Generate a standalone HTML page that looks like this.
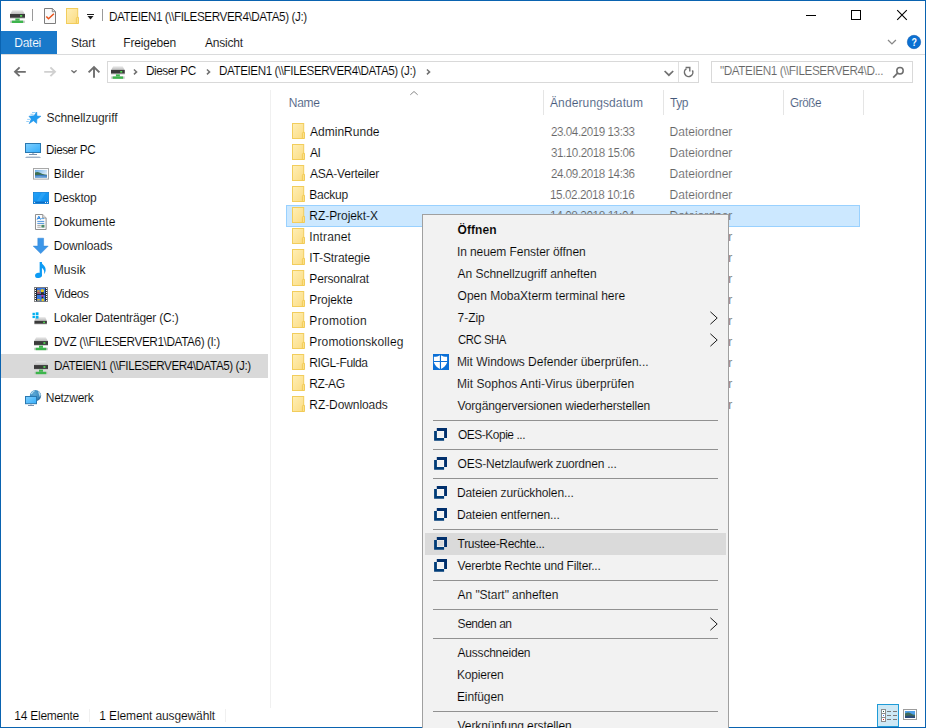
<!DOCTYPE html>
<html>
<head>
<meta charset="utf-8">
<title>DATEIEN1</title>
<style>
*{box-sizing:border-box;margin:0;padding:0}
html,body{width:926px;height:728px;overflow:hidden;background:#fff;font-family:"Liberation Sans",sans-serif}
body{font-family:"Liberation Sans",sans-serif;font-size:12px;color:#000;position:relative}
.abs{position:absolute}
.t{position:absolute;white-space:nowrap;line-height:14px;height:14px;transform-origin:0 50%;-webkit-text-stroke:0.12px #fff}
.hd{color:#44587a}
.gr{color:#666}
#frame{position:absolute;left:0;top:0;width:926px;height:728px;border:1px solid #0a63b0;z-index:5}
#filetab{position:absolute;left:1px;top:31px;width:56px;height:23px;background:#1979ca}
#ribline{position:absolute;left:1px;top:54px;width:924px;height:1px;background:#dadbdc}
.box{position:absolute;border:1px solid #d9d9d9;background:#fff}
.vsep{position:absolute;width:1px}
#navsel{position:absolute;left:1px;top:354px;width:267px;height:24px;background:#d9d9d9}
#navline{position:absolute;left:270px;top:90px;width:1px;height:618px;background:#f0f0f0}
.colsep{position:absolute;top:90px;width:1px;height:25px;background:#e5e5e5}
#rowsel{position:absolute;left:286px;top:205px;width:574px;height:22px;background:#cce8ff;border:1px solid #99d1ff}
#menu{position:absolute;left:422px;top:214px;width:307px;height:530px;background:#f2f2f2;border:1px solid #a0a0a0}
#menulayer{position:absolute;left:0;top:0;width:926px;height:728px;z-index:20;overflow:hidden}
.msep{position:absolute;left:433px;width:285px;height:1px;background:#919191}
#viewsel{position:absolute;left:877px;top:704px;width:22px;height:23px;background:#cde8f5;border:1px solid #1e9bd7}
</style>
</head>
<body>
<div id="frame"></div>

<!-- TITLE BAR ICONS -->
<div class="abs" style="left:10px;top:10px;width:15px;height:13px"><svg viewBox="0 0 14 13" width="100%" height="100%" preserveAspectRatio="none" style="display:block;overflow:visible" >
<defs><linearGradient id="ndg" x1="0" y1="0" x2="0" y2="1"><stop offset="0" stop-color="#ececec"/><stop offset="1" stop-color="#b9b9b9"/></linearGradient></defs>
<path d="M2.2,0.2 H11.8 L14,4.2 H0 Z" fill="url(#ndg)"/>
<rect x="0" y="4" width="14" height="3.9" fill="#3b3b3b"/>
<rect x="0" y="7.8" width="14" height="0.8" fill="#c4c4c4"/>
<rect x="9.4" y="5.1" width="2" height="1.6" fill="#55e455"/>
<rect x="5" y="8.5" width="4" height="2.5" fill="#3db54c"/>
<rect x="0" y="10.6" width="14" height="2.4" fill="#cfcfcf"/>
<rect x="1.7" y="10.6" width="10.6" height="2.4" fill="#3db54c"/>
</svg></div>
<div class="vsep" style="left:32px;top:9px;height:12px;background:#9a9a9a"></div>
<div class="abs" style="left:44px;top:8px;width:12px;height:16px"><svg viewBox="0 0 12 16" width="100%" height="100%" preserveAspectRatio="none" style="display:block;overflow:visible" >
<path d="M0.5,0.5 H8.3 L11.5,3.7 V15.5 H0.5 Z" fill="#fafafa" stroke="#7d7d7d" stroke-width="1"/>
<path d="M8.3,0.5 V3.7 H11.5" fill="none" stroke="#7d7d7d" stroke-width="0.9"/>
<path d="M2.3,8.4 L4.5,10.8 L9.9,5.8" fill="none" stroke="#e8521a" stroke-width="1.5"/>
</svg></div>
<div class="abs" style="left:66px;top:8px;width:13px;height:16px"><svg viewBox="0 0 13 16" width="100%" height="100%" preserveAspectRatio="none" style="display:block;overflow:visible" >
<defs><linearGradient id="fg" x1="0" y1="0" x2="1" y2="1"><stop offset="0" stop-color="#ffefb6"/><stop offset="1" stop-color="#fbdc83"/></linearGradient></defs>
<rect x="0.5" y="0.5" width="11.2" height="15" fill="url(#fg)" stroke="#f2cd5c" stroke-width="1"/>
<path d="M10.4,15.5 V10.3 Q10.4,9.4 11.3,9.4 H12.5 V15.5 Z" fill="#fbe08c" stroke="#f0c850" stroke-width="0.9"/>
</svg></div>
<div class="abs" style="left:87px;top:14px;width:7px;height:6px"><svg viewBox="0 0 7 6" width="100%" height="100%" preserveAspectRatio="none" style="display:block;overflow:visible" >
<rect x="0" y="0" width="7" height="1" fill="#1e1e1e"/>
<path d="M0.5,2 H6.5 L3.5,5.6 Z" fill="#1e1e1e"/>
</svg></div>
<div class="vsep" style="left:102px;top:9px;height:12px;background:#9a9a9a"></div>
<div class="abs" style="left:806px;top:15px;width:10px;height:1px"><svg viewBox="0 0 10 1" width="100%" height="100%" preserveAspectRatio="none" style="display:block;overflow:visible" shape-rendering="crispEdges"><rect x="0" y="0" width="10" height="1" fill="#000"/></svg></div>
<div class="abs" style="left:851px;top:10px;width:10px;height:10px"><svg viewBox="0 0 10 10" width="100%" height="100%" preserveAspectRatio="none" style="display:block;overflow:visible" shape-rendering="crispEdges"><rect x="0.5" y="0.5" width="9" height="9" fill="none" stroke="#000" stroke-width="1"/></svg></div>
<div class="abs" style="left:897px;top:10px;width:10px;height:10px"><svg viewBox="0 0 10 10" width="100%" height="100%" preserveAspectRatio="none" style="display:block;overflow:visible" ><path d="M0.2,0.2 L9.8,9.8 M9.8,0.2 L0.2,9.8" stroke="#000" stroke-width="1.1" fill="none"/></svg></div>

<!-- RIBBON -->
<div id="filetab"></div>
<div id="ribline"></div>
<div class="abs" style="left:887px;top:39px;width:10px;height:6px"><svg viewBox="887 39 10 6" width="100%" height="100%" preserveAspectRatio="none" style="display:block;overflow:visible" ><path d="M888,40 L891.95,43.9 L895.9,40" fill="none" stroke="#888" stroke-width="1.3"/></svg></div>
<div class="abs" style="left:907px;top:35px;width:14px;height:14px"><svg viewBox="0 0 14 14" width="100%" height="100%" preserveAspectRatio="none" style="display:block;overflow:visible" >
<circle cx="7" cy="7" r="6.7" fill="#0a70d2" stroke="#0c5cb4" stroke-width="0.6"/>
<text x="7.2" y="11.1" font-family="Liberation Sans, sans-serif" font-weight="bold" font-size="10.5" textLength="5.4" lengthAdjust="spacingAndGlyphs" fill="#fff" text-anchor="middle">?</text>
</svg></div>

<!-- ADDRESS BAR -->
<div class="abs" style="left:14px;top:67px;width:12px;height:9.6px"><svg viewBox="0 0 12 10" width="100%" height="100%" preserveAspectRatio="none" style="display:block;overflow:visible" ><path d="M11.8,5 H1.4 M5.6,0.4 L1,5 L5.6,9.6" fill="none" stroke="#6e6e6e" stroke-width="1.9"/></svg></div>
<div class="abs" style="left:44px;top:67px;width:12px;height:9.6px"><svg viewBox="0 0 12 10" width="100%" height="100%" preserveAspectRatio="none" style="display:block;overflow:visible" ><path d="M0.2,5 H10.6 M6.4,0.4 L11,5 L6.4,9.6" fill="none" stroke="#d0d0d0" stroke-width="1.9"/></svg></div>
<div class="abs" style="left:70.5px;top:69.7px;width:6px;height:3.4px"><svg viewBox="0 0 6 4" width="100%" height="100%" preserveAspectRatio="none" style="display:block;overflow:visible" ><path d="M0.4,0.4 L3,3 L5.6,0.4" fill="none" stroke="#6e6e6e" stroke-width="1.5"/></svg></div>
<div class="abs" style="left:88px;top:66px;width:12px;height:12px"><svg viewBox="0 0 12 12" width="100%" height="100%" preserveAspectRatio="none" style="display:block;overflow:visible" ><path d="M6,11.8 V1.4 M0.6,6.4 L6,1 L11.4,6.4" fill="none" stroke="#6e6e6e" stroke-width="1.9"/></svg></div>
<div class="box" style="left:107px;top:61px;width:592px;height:22px"></div>
<div class="vsep" style="left:678px;top:62px;height:20px;background:#e0e0e0"></div>
<div class="box" style="left:711px;top:61px;width:202px;height:22px"></div>
<div class="abs" style="left:111.4px;top:66.3px;width:13.8px;height:12.8px"><svg viewBox="0 0 14 13" width="100%" height="100%" preserveAspectRatio="none" style="display:block;overflow:visible" >
<defs><linearGradient id="ndg" x1="0" y1="0" x2="0" y2="1"><stop offset="0" stop-color="#ececec"/><stop offset="1" stop-color="#b9b9b9"/></linearGradient></defs>
<path d="M2.2,0.2 H11.8 L14,4.2 H0 Z" fill="url(#ndg)"/>
<rect x="0" y="4" width="14" height="3.9" fill="#3b3b3b"/>
<rect x="0" y="7.8" width="14" height="0.8" fill="#c4c4c4"/>
<rect x="9.4" y="5.1" width="2" height="1.6" fill="#55e455"/>
<rect x="5" y="8.5" width="4" height="2.5" fill="#3db54c"/>
<rect x="0" y="10.6" width="14" height="2.4" fill="#cfcfcf"/>
<rect x="1.7" y="10.6" width="10.6" height="2.4" fill="#3db54c"/>
</svg></div>
<div class="abs" style="left:133.4px;top:69.1px;width:4.7px;height:5.8px"><svg viewBox="0 0 5 6" width="100%" height="100%" preserveAspectRatio="none" style="display:block;overflow:visible" ><path d="M1,0.5 L3.8,3 L1,5.5" fill="none" stroke="#707070" stroke-width="1.6"/></svg></div>
<div class="abs" style="left:205.8px;top:69.1px;width:4.7px;height:5.8px"><svg viewBox="0 0 5 6" width="100%" height="100%" preserveAspectRatio="none" style="display:block;overflow:visible" ><path d="M1,0.5 L3.8,3 L1,5.5" fill="none" stroke="#707070" stroke-width="1.6"/></svg></div>
<div class="abs" style="left:426.2px;top:69.1px;width:4.7px;height:5.8px"><svg viewBox="0 0 5 6" width="100%" height="100%" preserveAspectRatio="none" style="display:block;overflow:visible" ><path d="M1,0.5 L3.8,3 L1,5.5" fill="none" stroke="#707070" stroke-width="1.6"/></svg></div>
<div class="abs" style="left:664px;top:70px;width:10px;height:6px"><svg viewBox="664 70 10 6" width="100%" height="100%" preserveAspectRatio="none" style="display:block;overflow:visible" ><path d="M664.6,71 L668.9,75.2 L673.2,71" fill="none" stroke="#707070" stroke-width="1.7"/></svg></div>
<div class="abs" style="left:683px;top:66px;width:12px;height:13px"><svg viewBox="683 66 12 13" width="100%" height="100%" preserveAspectRatio="none" style="display:block;overflow:visible" >
<path d="M686.5,68.7 A4.2,4.2 0 1 0 692.4,70.4" fill="none" stroke="#6e6e6e" stroke-width="1.5"/>
<path d="M685.6,67.5 H689.8 V71.4" fill="none" stroke="#6e6e6e" stroke-width="1.4"/>
</svg></div>
<div class="abs" style="left:892px;top:66px;width:13px;height:13px"><svg viewBox="892 66 13 13" width="100%" height="100%" preserveAspectRatio="none" style="display:block;overflow:visible" >
<circle cx="900" cy="70.7" r="3.2" fill="none" stroke="#6e6e6e" stroke-width="1.5"/>
<path d="M897.6,73.2 L893.2,77.7" stroke="#6e6e6e" stroke-width="1.7" fill="none"/>
</svg></div>

<!-- NAV PANE -->
<div id="navsel"></div>
<div id="navline"></div>
<div class="abs" style="left:26px;top:111px;width:16px;height:14px"><svg viewBox="26 111 16 14" width="100%" height="100%" preserveAspectRatio="none" style="display:block;overflow:visible" >
<path d="M36.7,112 L37,116 L41,116.2 L36.9,119.3 L36.7,123.4 L33.4,120.8 L29.1,123.7 L31.2,119 L28.9,116.2 L33.9,115.7 Z" fill="#219cf0" stroke="#1c8fe4" stroke-width="0.5" stroke-linejoin="round"/>
<path d="M32,112.5 H35.8 M30.4,114.3 H33.6 M27.2,119.4 H30 M26.3,121.5 H28.9" stroke="#8ccbf6" stroke-width="0.9" fill="none"/>
</svg></div>
<div class="abs" style="left:25px;top:143px;width:16px;height:15px"><svg viewBox="25 143 16 15" width="100%" height="100%" preserveAspectRatio="none" style="display:block;overflow:visible" >
<defs><linearGradient id="pcg" x1="0" y1="0" x2="1" y2="1"><stop offset="0" stop-color="#80d0ff"/><stop offset="1" stop-color="#34adfb"/></linearGradient>
<linearGradient id="pcb" x1="0" y1="0" x2="0" y2="1"><stop offset="0" stop-color="#d4dde7"/><stop offset="1" stop-color="#8aa0b9"/></linearGradient></defs>
<rect x="25.5" y="143.5" width="15" height="9" fill="url(#pcg)" stroke="#2a78b0" stroke-width="1"/>
<rect x="32" y="153" width="2.2" height="1" fill="#b4c0ce"/>
<rect x="29" y="154" width="8" height="1" fill="#7892b0"/>
<path d="M26.6,156.2 H39.4 L41,158 H25 Z" fill="url(#pcb)"/>
</svg></div>
<div class="abs" style="left:33px;top:168px;width:16px;height:11.6px"><svg viewBox="0 0 16 12" width="100%" height="100%" preserveAspectRatio="none" style="display:block;overflow:visible" >
<defs><linearGradient id="sky" x1="0" y1="0" x2="1" y2="0.6"><stop offset="0" stop-color="#6aaee8"/><stop offset="1" stop-color="#e6f1fa"/></linearGradient></defs>
<rect x="0.5" y="0.5" width="15" height="11" fill="#fdfdfd" stroke="#a6a6a6" stroke-width="1"/>
<rect x="2" y="2" width="12" height="8" fill="url(#sky)"/>
<path d="M2,4.6 Q4.6,3.4 7,5 T12,6.6 L14,7 V8 H2 Z" fill="#3f6f50"/>
<path d="M2,7.4 Q8,6.6 14,7.6 V10 H2 Z" fill="#3d7cc0"/>
<path d="M2,8.8 Q8,8.2 14,9 V10 H2 Z" fill="#7fb0dc"/>
</svg></div>
<div class="abs" style="left:33px;top:192px;width:16px;height:12px"><svg viewBox="0 0 16 12" width="100%" height="100%" preserveAspectRatio="none" style="display:block;overflow:visible" >
<defs><linearGradient id="dtg" x1="0" y1="0" x2="1" y2="1"><stop offset="0" stop-color="#25a2f8"/><stop offset="0.5" stop-color="#1596f2"/><stop offset="1" stop-color="#0c8cec"/></linearGradient></defs>
<rect x="0.4" y="0.4" width="15.2" height="11.2" fill="url(#dtg)" stroke="#1080d8" stroke-width="0.8"/>
<path d="M9,0.8 L13,0.8 L7,9.4 L3.4,9.4 Z" fill="#4ab4fb" opacity="0.35"/>
<rect x="0.4" y="9.6" width="15.2" height="1.6" fill="#0b6cc4"/>
<rect x="1.1" y="9.9" width="1" height="1" fill="#fff"/><rect x="12" y="9.9" width="1" height="1" fill="#fff"/><rect x="14" y="9.9" width="1" height="1" fill="#fff"/>
</svg></div>
<div class="abs" style="left:35.2px;top:213.5px;width:11.6px;height:16px"><svg viewBox="0 0 12 16" width="100%" height="100%" preserveAspectRatio="none" style="display:block;overflow:visible" >
<path d="M0.5,0.5 H8 L11.5,4 V15.5 H0.5 Z" fill="#fcfcfc" stroke="#8e8e8e" stroke-width="1"/>
<path d="M8,0.5 V4 H11.5" fill="#e6e6e6" stroke="#8e8e8e" stroke-width="0.9"/>
<path d="M2.2,5.6 L4,2.2 L5.8,5.6 M3,4.4 H5" stroke="#1f7fe0" stroke-width="1" fill="none"/><path d="M6.4,4.6 H9.4" stroke="#4a9ae6" stroke-width="0.9"/>
<path d="M2.4,7.4 H9.6 M2.4,9.4 H9.6" stroke="#4a90d9" stroke-width="1"/>
<path d="M2.4,11.4 H6 M2.4,13.2 H6" stroke="#9a9a9a" stroke-width="0.9"/>
<rect x="6.6" y="10.8" width="3.2" height="2.8" fill="#4d8a6a"/>
</svg></div>
<div class="abs" style="left:33.4px;top:238.2px;width:15.4px;height:15.8px"><svg viewBox="0 0 16 16" width="100%" height="100%" preserveAspectRatio="none" style="display:block;overflow:visible" ><path d="M5,0.2 H11 V8.2 H15.8 L8,15.8 L0.2,8.2 H5 Z" fill="#3c96e8" stroke="#2c80d4" stroke-width="0.5"/></svg></div>
<div class="abs" style="left:35.2px;top:262px;width:11.4px;height:16px"><svg viewBox="0 0 12 16" width="100%" height="100%" preserveAspectRatio="none" style="display:block;overflow:visible" >
<ellipse cx="3.7" cy="13.4" rx="3.7" ry="2.6" fill="#0d9bf4" transform="rotate(-12 3.7 13.4)"/>
<rect x="4.9" y="0" width="2.4" height="13.6" fill="#0d9bf4"/>
<path d="M6.2,0 C7.6,2.6 11.6,4 11.2,8.2 C11.1,9.8 10.6,10.8 9.6,12 C10.2,9 9.4,6.6 6.2,5.4 Z" fill="#0d9bf4"/>
</svg></div>
<div class="abs" style="left:34px;top:287px;width:14px;height:15px"><svg viewBox="0 0 14 15" width="100%" height="100%" preserveAspectRatio="none" style="display:block;overflow:visible" >
<rect x="0.4" y="0.4" width="13.2" height="14.2" fill="#1c1c1c" stroke="#7d7d7d" stroke-width="0.8"/>
<rect x="2.8" y="0.9" width="8.4" height="6.2" fill="#3a78e0"/>
<rect x="2.8" y="7.9" width="8.4" height="6.2" fill="#3a78e0"/>
<circle cx="8.3" cy="3.7" r="1.7" fill="#e8c81e"/><rect x="7" y="5.2" width="2.8" height="1.9" fill="#2a2a2a"/>
<rect x="3.2" y="3.2" width="2.4" height="1.6" fill="#e6a030"/><rect x="3" y="5.2" width="3.4" height="1.4" fill="#c8483a"/>
<circle cx="8.4" cy="8.9" r="1.2" fill="#c03aa0"/><rect x="7.6" y="9.6" width="1.6" height="2" fill="#2a2a2a"/>
<circle cx="8.8" cy="12.9" r="1.4" fill="#e8c81e"/><rect x="3.2" y="12" width="2.6" height="1.6" fill="#d8b040"/>
<g fill="#fff"><rect x="0.9" y="1.0" width="1.1" height="1.1"/><rect x="12" y="1.0" width="1.1" height="1.1"/><rect x="0.9" y="3.0" width="1.1" height="1.1"/><rect x="12" y="3.0" width="1.1" height="1.1"/><rect x="0.9" y="5.0" width="1.1" height="1.1"/><rect x="12" y="5.0" width="1.1" height="1.1"/><rect x="0.9" y="7.0" width="1.1" height="1.1"/><rect x="12" y="7.0" width="1.1" height="1.1"/><rect x="0.9" y="9.0" width="1.1" height="1.1"/><rect x="12" y="9.0" width="1.1" height="1.1"/><rect x="0.9" y="11.0" width="1.1" height="1.1"/><rect x="12" y="11.0" width="1.1" height="1.1"/><rect x="0.9" y="13.0" width="1.1" height="1.1"/><rect x="12" y="13.0" width="1.1" height="1.1"/></g>
</svg></div>
<div class="abs" style="left:32px;top:312px;width:16px;height:13px"><svg viewBox="32.5 312 16 13" width="100%" height="100%" preserveAspectRatio="none" style="display:block;overflow:visible" >
<defs><linearGradient id="ldg" x1="0" y1="0" x2="0" y2="1"><stop offset="0" stop-color="#eeeeee"/><stop offset="1" stop-color="#b4b4b4"/></linearGradient></defs>
<path d="M36.4,317 H45.8 L47.4,321 H34.9 Z" fill="url(#ldg)"/>
<g fill="#00b0f0"><rect x="33" y="312.8" width="2.4" height="2.3"/><rect x="36.2" y="312.3" width="2.8" height="2.8"/><rect x="33" y="315.8" width="2.4" height="2.3"/><rect x="36.2" y="315.8" width="2.8" height="2.8"/></g>
<rect x="34.9" y="320.9" width="12.5" height="3" fill="#3a3a3a"/>
<rect x="43.7" y="321.7" width="1.7" height="1.4" fill="#4fe64f"/>
<rect x="34.9" y="323.8" width="12.5" height="0.7" fill="#c9c9c9"/>
</svg></div>
<div class="abs" style="left:34px;top:336.8px;width:14px;height:13.2px"><svg viewBox="0 0 14 13" width="100%" height="100%" preserveAspectRatio="none" style="display:block;overflow:visible" >
<defs><linearGradient id="ndg" x1="0" y1="0" x2="0" y2="1"><stop offset="0" stop-color="#ececec"/><stop offset="1" stop-color="#b9b9b9"/></linearGradient></defs>
<path d="M2.2,0.2 H11.8 L14,4.2 H0 Z" fill="url(#ndg)"/>
<rect x="0" y="4" width="14" height="3.9" fill="#3b3b3b"/>
<rect x="0" y="7.8" width="14" height="0.8" fill="#c4c4c4"/>
<rect x="9.4" y="5.1" width="2" height="1.6" fill="#55e455"/>
<rect x="5" y="8.5" width="4" height="2.5" fill="#3db54c"/>
<rect x="0" y="10.6" width="14" height="2.4" fill="#cfcfcf"/>
<rect x="1.7" y="10.6" width="10.6" height="2.4" fill="#3db54c"/>
</svg></div>
<div class="abs" style="left:34px;top:360.8px;width:14px;height:13.2px"><svg viewBox="0 0 14 13" width="100%" height="100%" preserveAspectRatio="none" style="display:block;overflow:visible" >
<defs><linearGradient id="ndg" x1="0" y1="0" x2="0" y2="1"><stop offset="0" stop-color="#ececec"/><stop offset="1" stop-color="#b9b9b9"/></linearGradient></defs>
<path d="M2.2,0.2 H11.8 L14,4.2 H0 Z" fill="url(#ndg)"/>
<rect x="0" y="4" width="14" height="3.9" fill="#3b3b3b"/>
<rect x="0" y="7.8" width="14" height="0.8" fill="#c4c4c4"/>
<rect x="9.4" y="5.1" width="2" height="1.6" fill="#55e455"/>
<rect x="5" y="8.5" width="4" height="2.5" fill="#3db54c"/>
<rect x="0" y="10.6" width="14" height="2.4" fill="#cfcfcf"/>
<rect x="1.7" y="10.6" width="10.6" height="2.4" fill="#3db54c"/>
</svg></div>
<div class="abs" style="left:25px;top:389px;width:17px;height:18px"><svg viewBox="25 389 17 18" width="100%" height="100%" preserveAspectRatio="none" style="display:block;overflow:visible" >
<defs><radialGradient id="glb" cx="0.4" cy="0.35" r="0.75"><stop offset="0" stop-color="#5aa8d6"/><stop offset="0.6" stop-color="#3b8abf"/><stop offset="1" stop-color="#245f8f"/></radialGradient>
<linearGradient id="nwm" x1="0" y1="0" x2="1" y2="1"><stop offset="0" stop-color="#80d0ff"/><stop offset="1" stop-color="#34adfb"/></linearGradient></defs>
<circle cx="35.5" cy="395.6" r="5.6" fill="url(#glb)"/>
<path d="M31,393.2 Q32.4,390.8 35,390.4 Q34.6,392 33,392.6 Q32.6,394 31.2,394.6 Z M38,391 Q40.2,392 40.8,394.6 Q40.6,396.6 39.8,397 Q39.2,395 38.6,393.4 Z" fill="#cfeaf6" opacity="0.85"/>
<rect x="25.5" y="396.5" width="11" height="7.2" fill="url(#nwm)" stroke="#2a78b0" stroke-width="1"/>
<rect x="30" y="404.1" width="2" height="0.9" fill="#b4c0ce"/>
<rect x="28" y="405" width="6" height="1" fill="#7892b0"/>
</svg></div>

<!-- HEADER -->
<div class="colsep" style="left:543px"></div>
<div class="colsep" style="left:663px"></div>
<div class="colsep" style="left:783px"></div>
<div class="colsep" style="left:863px"></div>
<div class="abs" style="left:409.8px;top:90.5px;width:8px;height:4px"><svg viewBox="0 0 8 4" width="100%" height="100%" preserveAspectRatio="none" style="display:block;overflow:visible" ><path d="M0.3,3.8 L4,0.5 L7.7,3.8" fill="none" stroke="#8a8a8a" stroke-width="1"/></svg></div>

<!-- ROWS -->
<div id="rowsel"></div>
<div class="abs" style="left:292px;top:123px;width:13px;height:16px"><svg viewBox="0 0 13 16" width="100%" height="100%" preserveAspectRatio="none" style="display:block;overflow:visible" >
<defs><linearGradient id="fg" x1="0" y1="0" x2="1" y2="1"><stop offset="0" stop-color="#ffefb6"/><stop offset="1" stop-color="#fbdc83"/></linearGradient></defs>
<rect x="0.5" y="0.5" width="11.2" height="15" fill="url(#fg)" stroke="#f2cd5c" stroke-width="1"/>
<path d="M10.4,15.5 V10.3 Q10.4,9.4 11.3,9.4 H12.5 V15.5 Z" fill="#fbe08c" stroke="#f0c850" stroke-width="0.9"/>
</svg></div>
<div class="abs" style="left:292px;top:144px;width:13px;height:16px"><svg viewBox="0 0 13 16" width="100%" height="100%" preserveAspectRatio="none" style="display:block;overflow:visible" >
<defs><linearGradient id="fg" x1="0" y1="0" x2="1" y2="1"><stop offset="0" stop-color="#ffefb6"/><stop offset="1" stop-color="#fbdc83"/></linearGradient></defs>
<rect x="0.5" y="0.5" width="11.2" height="15" fill="url(#fg)" stroke="#f2cd5c" stroke-width="1"/>
<path d="M10.4,15.5 V10.3 Q10.4,9.4 11.3,9.4 H12.5 V15.5 Z" fill="#fbe08c" stroke="#f0c850" stroke-width="0.9"/>
</svg></div>
<div class="abs" style="left:292px;top:165px;width:13px;height:16px"><svg viewBox="0 0 13 16" width="100%" height="100%" preserveAspectRatio="none" style="display:block;overflow:visible" >
<defs><linearGradient id="fg" x1="0" y1="0" x2="1" y2="1"><stop offset="0" stop-color="#ffefb6"/><stop offset="1" stop-color="#fbdc83"/></linearGradient></defs>
<rect x="0.5" y="0.5" width="11.2" height="15" fill="url(#fg)" stroke="#f2cd5c" stroke-width="1"/>
<path d="M10.4,15.5 V10.3 Q10.4,9.4 11.3,9.4 H12.5 V15.5 Z" fill="#fbe08c" stroke="#f0c850" stroke-width="0.9"/>
</svg></div>
<div class="abs" style="left:292px;top:186px;width:13px;height:16px"><svg viewBox="0 0 13 16" width="100%" height="100%" preserveAspectRatio="none" style="display:block;overflow:visible" >
<defs><linearGradient id="fg" x1="0" y1="0" x2="1" y2="1"><stop offset="0" stop-color="#ffefb6"/><stop offset="1" stop-color="#fbdc83"/></linearGradient></defs>
<rect x="0.5" y="0.5" width="11.2" height="15" fill="url(#fg)" stroke="#f2cd5c" stroke-width="1"/>
<path d="M10.4,15.5 V10.3 Q10.4,9.4 11.3,9.4 H12.5 V15.5 Z" fill="#fbe08c" stroke="#f0c850" stroke-width="0.9"/>
</svg></div>
<div class="abs" style="left:292px;top:207px;width:13px;height:16px"><svg viewBox="0 0 13 16" width="100%" height="100%" preserveAspectRatio="none" style="display:block;overflow:visible" >
<defs><linearGradient id="fg" x1="0" y1="0" x2="1" y2="1"><stop offset="0" stop-color="#ffefb6"/><stop offset="1" stop-color="#fbdc83"/></linearGradient></defs>
<rect x="0.5" y="0.5" width="11.2" height="15" fill="url(#fg)" stroke="#f2cd5c" stroke-width="1"/>
<path d="M10.4,15.5 V10.3 Q10.4,9.4 11.3,9.4 H12.5 V15.5 Z" fill="#fbe08c" stroke="#f0c850" stroke-width="0.9"/>
</svg></div>
<div class="abs" style="left:292px;top:228px;width:13px;height:16px"><svg viewBox="0 0 13 16" width="100%" height="100%" preserveAspectRatio="none" style="display:block;overflow:visible" >
<defs><linearGradient id="fg" x1="0" y1="0" x2="1" y2="1"><stop offset="0" stop-color="#ffefb6"/><stop offset="1" stop-color="#fbdc83"/></linearGradient></defs>
<rect x="0.5" y="0.5" width="11.2" height="15" fill="url(#fg)" stroke="#f2cd5c" stroke-width="1"/>
<path d="M10.4,15.5 V10.3 Q10.4,9.4 11.3,9.4 H12.5 V15.5 Z" fill="#fbe08c" stroke="#f0c850" stroke-width="0.9"/>
</svg></div>
<div class="abs" style="left:292px;top:249px;width:13px;height:16px"><svg viewBox="0 0 13 16" width="100%" height="100%" preserveAspectRatio="none" style="display:block;overflow:visible" >
<defs><linearGradient id="fg" x1="0" y1="0" x2="1" y2="1"><stop offset="0" stop-color="#ffefb6"/><stop offset="1" stop-color="#fbdc83"/></linearGradient></defs>
<rect x="0.5" y="0.5" width="11.2" height="15" fill="url(#fg)" stroke="#f2cd5c" stroke-width="1"/>
<path d="M10.4,15.5 V10.3 Q10.4,9.4 11.3,9.4 H12.5 V15.5 Z" fill="#fbe08c" stroke="#f0c850" stroke-width="0.9"/>
</svg></div>
<div class="abs" style="left:292px;top:270px;width:13px;height:16px"><svg viewBox="0 0 13 16" width="100%" height="100%" preserveAspectRatio="none" style="display:block;overflow:visible" >
<defs><linearGradient id="fg" x1="0" y1="0" x2="1" y2="1"><stop offset="0" stop-color="#ffefb6"/><stop offset="1" stop-color="#fbdc83"/></linearGradient></defs>
<rect x="0.5" y="0.5" width="11.2" height="15" fill="url(#fg)" stroke="#f2cd5c" stroke-width="1"/>
<path d="M10.4,15.5 V10.3 Q10.4,9.4 11.3,9.4 H12.5 V15.5 Z" fill="#fbe08c" stroke="#f0c850" stroke-width="0.9"/>
</svg></div>
<div class="abs" style="left:292px;top:291px;width:13px;height:16px"><svg viewBox="0 0 13 16" width="100%" height="100%" preserveAspectRatio="none" style="display:block;overflow:visible" >
<defs><linearGradient id="fg" x1="0" y1="0" x2="1" y2="1"><stop offset="0" stop-color="#ffefb6"/><stop offset="1" stop-color="#fbdc83"/></linearGradient></defs>
<rect x="0.5" y="0.5" width="11.2" height="15" fill="url(#fg)" stroke="#f2cd5c" stroke-width="1"/>
<path d="M10.4,15.5 V10.3 Q10.4,9.4 11.3,9.4 H12.5 V15.5 Z" fill="#fbe08c" stroke="#f0c850" stroke-width="0.9"/>
</svg></div>
<div class="abs" style="left:292px;top:312px;width:13px;height:16px"><svg viewBox="0 0 13 16" width="100%" height="100%" preserveAspectRatio="none" style="display:block;overflow:visible" >
<defs><linearGradient id="fg" x1="0" y1="0" x2="1" y2="1"><stop offset="0" stop-color="#ffefb6"/><stop offset="1" stop-color="#fbdc83"/></linearGradient></defs>
<rect x="0.5" y="0.5" width="11.2" height="15" fill="url(#fg)" stroke="#f2cd5c" stroke-width="1"/>
<path d="M10.4,15.5 V10.3 Q10.4,9.4 11.3,9.4 H12.5 V15.5 Z" fill="#fbe08c" stroke="#f0c850" stroke-width="0.9"/>
</svg></div>
<div class="abs" style="left:292px;top:333px;width:13px;height:16px"><svg viewBox="0 0 13 16" width="100%" height="100%" preserveAspectRatio="none" style="display:block;overflow:visible" >
<defs><linearGradient id="fg" x1="0" y1="0" x2="1" y2="1"><stop offset="0" stop-color="#ffefb6"/><stop offset="1" stop-color="#fbdc83"/></linearGradient></defs>
<rect x="0.5" y="0.5" width="11.2" height="15" fill="url(#fg)" stroke="#f2cd5c" stroke-width="1"/>
<path d="M10.4,15.5 V10.3 Q10.4,9.4 11.3,9.4 H12.5 V15.5 Z" fill="#fbe08c" stroke="#f0c850" stroke-width="0.9"/>
</svg></div>
<div class="abs" style="left:292px;top:354px;width:13px;height:16px"><svg viewBox="0 0 13 16" width="100%" height="100%" preserveAspectRatio="none" style="display:block;overflow:visible" >
<defs><linearGradient id="fg" x1="0" y1="0" x2="1" y2="1"><stop offset="0" stop-color="#ffefb6"/><stop offset="1" stop-color="#fbdc83"/></linearGradient></defs>
<rect x="0.5" y="0.5" width="11.2" height="15" fill="url(#fg)" stroke="#f2cd5c" stroke-width="1"/>
<path d="M10.4,15.5 V10.3 Q10.4,9.4 11.3,9.4 H12.5 V15.5 Z" fill="#fbe08c" stroke="#f0c850" stroke-width="0.9"/>
</svg></div>
<div class="abs" style="left:292px;top:375px;width:13px;height:16px"><svg viewBox="0 0 13 16" width="100%" height="100%" preserveAspectRatio="none" style="display:block;overflow:visible" >
<defs><linearGradient id="fg" x1="0" y1="0" x2="1" y2="1"><stop offset="0" stop-color="#ffefb6"/><stop offset="1" stop-color="#fbdc83"/></linearGradient></defs>
<rect x="0.5" y="0.5" width="11.2" height="15" fill="url(#fg)" stroke="#f2cd5c" stroke-width="1"/>
<path d="M10.4,15.5 V10.3 Q10.4,9.4 11.3,9.4 H12.5 V15.5 Z" fill="#fbe08c" stroke="#f0c850" stroke-width="0.9"/>
</svg></div>
<div class="abs" style="left:292px;top:396px;width:13px;height:16px"><svg viewBox="0 0 13 16" width="100%" height="100%" preserveAspectRatio="none" style="display:block;overflow:visible" >
<defs><linearGradient id="fg" x1="0" y1="0" x2="1" y2="1"><stop offset="0" stop-color="#ffefb6"/><stop offset="1" stop-color="#fbdc83"/></linearGradient></defs>
<rect x="0.5" y="0.5" width="11.2" height="15" fill="url(#fg)" stroke="#f2cd5c" stroke-width="1"/>
<path d="M10.4,15.5 V10.3 Q10.4,9.4 11.3,9.4 H12.5 V15.5 Z" fill="#fbe08c" stroke="#f0c850" stroke-width="0.9"/>
</svg></div>

<!-- STATUS -->
<div class="vsep" style="left:89px;top:709px;height:13px;background:#f0f0f0"></div>
<div class="vsep" style="left:225px;top:709px;height:13px;background:#f0f0f0"></div>
<div id="viewsel"></div>
<div class="abs" style="left:880px;top:708px;width:18px;height:15px"><svg viewBox="880 708 18 15" width="100%" height="100%" preserveAspectRatio="none" style="display:block;overflow:visible" shape-rendering="crispEdges">
<g fill="#fff" stroke="#8c8c8c" stroke-width="1"><rect x="881.5" y="709.5" width="4" height="4"/><rect x="881.5" y="713.5" width="4" height="4"/><rect x="881.5" y="717.5" width="4" height="4"/></g>
<rect x="883" y="711" width="1" height="1" fill="#2f5f4a"/><rect x="883" y="715" width="1" height="1" fill="#3f7cf0"/><rect x="883" y="719" width="1" height="1" fill="#e01818"/>
<g fill="#7a7a7a"><rect x="887" y="711" width="4" height="1"/><rect x="893" y="711" width="4" height="1"/><rect x="887" y="715" width="4" height="1"/><rect x="893" y="715" width="4" height="1"/><rect x="887" y="719" width="4" height="1"/><rect x="893" y="719" width="4" height="1"/></g>
</svg></div>
<div class="abs" style="left:903px;top:709px;width:14px;height:11px"><svg viewBox="903 709 14 11" width="100%" height="100%" preserveAspectRatio="none" style="display:block;overflow:visible" >
<rect x="903.5" y="709.5" width="13" height="10" fill="#fdfdfd" stroke="#9c9c9c" stroke-width="1"/>
<rect x="905" y="711" width="10" height="7" fill="#4f9fe8"/>
<path d="M905,713.6 Q908,711.6 911,713.4 T915,714.4 V718 H905 Z" fill="#3f6a5a"/>
<path d="M905,716 Q910,714.6 915,716.4 V718 H905 Z" fill="#2a4a78"/>
</svg></div>

<div class="t" style="left:109.3px;top:9.5px;letter-spacing:-0.450px;transform:scaleX(0.9783);">DATEIEN1 (\\FILESERVER4\DATA5) (J:)</div>
<div class="t" style="left:14.3px;top:36px;letter-spacing:-0.263px;color:#fff;-webkit-text-stroke-color:#1979ca">Datei</div>
<div class="t" style="left:71px;top:36px;letter-spacing:-0.269px;">Start</div>
<div class="t" style="left:123.3px;top:36px;letter-spacing:-0.150px;">Freigeben</div>
<div class="t" style="left:205px;top:36px;letter-spacing:-0.194px;">Ansicht</div>
<div class="t" style="left:146.3px;top:64px;letter-spacing:-0.450px;transform:scaleX(0.9815);">Dieser PC</div>
<div class="t" style="left:219.3px;top:64px;letter-spacing:-0.450px;transform:scaleX(0.9734);">DATEIEN1 (\\FILESERVER4\DATA5) (J:)</div>
<div class="t gr" style="left:720px;top:64px;letter-spacing:-0.450px;transform:scaleX(0.9810);">"DATEIEN1 (\\FILESERVER4\D...</div>
<div class="t" style="left:46.5px;top:111px;letter-spacing:-0.059px;">Schnellzugriff</div>
<div class="t" style="left:45.8px;top:143px;letter-spacing:-0.450px;transform:scaleX(0.9716);">Dieser PC</div>
<div class="t" style="left:53.8px;top:167px;letter-spacing:-0.065px;">Bilder</div>
<div class="t" style="left:53.8px;top:191px;letter-spacing:-0.190px;">Desktop</div>
<div class="t" style="left:53.8px;top:215px;letter-spacing:0.036px;">Dokumente</div>
<div class="t" style="left:53.8px;top:239px;letter-spacing:-0.075px;">Downloads</div>
<div class="t" style="left:53.8px;top:263px;letter-spacing:0.071px;">Musik</div>
<div class="t" style="left:54.5px;top:287px;letter-spacing:-0.414px;">Videos</div>
<div class="t" style="left:53.8px;top:311px;letter-spacing:-0.195px;">Lokaler Datenträger (C:)</div>
<div class="t" style="left:53.8px;top:335px;letter-spacing:-0.450px;transform:scaleX(0.9870);">DVZ (\\FILESERVER1\DATA6) (I:)</div>
<div class="t" style="left:53.8px;top:359px;letter-spacing:-0.450px;transform:scaleX(0.9734);-webkit-text-stroke-color:#d9d9d9">DATEIEN1 (\\FILESERVER4\DATA5) (J:)</div>
<div class="t" style="left:45.8px;top:391px;letter-spacing:-0.289px;">Netzwerk</div>
<div class="t hd" style="left:288.8px;top:96px;letter-spacing:-0.329px;">Name</div>
<div class="t hd" style="left:550px;top:96px;letter-spacing:0.114px;">Änderungsdatum</div>
<div class="t hd" style="left:670px;top:96px;letter-spacing:-0.448px;">Typ</div>
<div class="t hd" style="left:790px;top:96px;letter-spacing:-0.450px;transform:scaleX(0.9759);">Größe</div>
<div class="t" style="left:310px;top:125px;letter-spacing:0.013px;">AdminRunde</div>
<div class="t gr" style="left:550.5px;top:125px;letter-spacing:-0.450px;transform:scaleX(0.9684);">23.04.2019 13:33</div>
<div class="t gr" style="left:669.6px;top:125px;letter-spacing:-0.000px;">Dateiordner</div>
<div class="t" style="left:310px;top:146px;letter-spacing:-0.422px;">AI</div>
<div class="t gr" style="left:550.5px;top:146px;letter-spacing:-0.450px;transform:scaleX(0.9684);">31.10.2018 15:06</div>
<div class="t gr" style="left:669.6px;top:146px;letter-spacing:-0.000px;">Dateiordner</div>
<div class="t" style="left:310px;top:167px;letter-spacing:-0.233px;">ASA-Verteiler</div>
<div class="t gr" style="left:550.5px;top:167px;letter-spacing:-0.450px;transform:scaleX(0.9684);">24.09.2018 14:36</div>
<div class="t gr" style="left:669.6px;top:167px;letter-spacing:-0.000px;">Dateiordner</div>
<div class="t" style="left:309.3px;top:188px;letter-spacing:-0.222px;">Backup</div>
<div class="t gr" style="left:549.8px;top:188px;letter-spacing:-0.450px;transform:scaleX(0.9766);">15.02.2018 10:16</div>
<div class="t gr" style="left:669.6px;top:188px;letter-spacing:-0.000px;">Dateiordner</div>
<div class="t" style="left:309.3px;top:209px;letter-spacing:-0.054px;-webkit-text-stroke-color:#cce8ff">RZ-Projekt-X</div>
<div class="t gr" style="left:549.8px;top:209px;letter-spacing:-0.450px;transform:scaleX(0.9867);-webkit-text-stroke-color:#cce8ff">14.08.2018 11:04</div>
<div class="t gr" style="left:669.6px;top:209px;letter-spacing:-0.000px;-webkit-text-stroke-color:#cce8ff">Dateiordner</div>
<div class="t" style="left:309.3px;top:230px;letter-spacing:0.125px;">Intranet</div>
<div class="t gr" style="left:549.8px;top:230px;letter-spacing:-0.450px;transform:scaleX(0.9867);">11.01.2019 09:12</div>
<div class="t gr" style="left:669.6px;top:230px;letter-spacing:-0.000px;">Dateiordner</div>
<div class="t" style="left:309.3px;top:251px;letter-spacing:-0.111px;">IT-Strategie</div>
<div class="t gr" style="left:550.5px;top:251px;letter-spacing:-0.450px;transform:scaleX(0.9684);">05.03.2019 10:45</div>
<div class="t gr" style="left:669.6px;top:251px;letter-spacing:-0.000px;">Dateiordner</div>
<div class="t" style="left:309.3px;top:272px;letter-spacing:-0.152px;">Personalrat</div>
<div class="t gr" style="left:549.8px;top:272px;letter-spacing:-0.450px;transform:scaleX(0.9867);">19.11.2018 14:02</div>
<div class="t gr" style="left:669.6px;top:272px;letter-spacing:-0.000px;">Dateiordner</div>
<div class="t" style="left:309.3px;top:293px;letter-spacing:-0.091px;">Projekte</div>
<div class="t gr" style="left:550.5px;top:293px;letter-spacing:-0.450px;transform:scaleX(0.9684);">08.04.2019 16:20</div>
<div class="t gr" style="left:669.6px;top:293px;letter-spacing:-0.000px;">Dateiordner</div>
<div class="t" style="left:309.3px;top:314px;letter-spacing:0.333px;">Promotion</div>
<div class="t gr" style="left:550.5px;top:314px;letter-spacing:-0.450px;transform:scaleX(0.9785);">27.02.2019 11:31</div>
<div class="t gr" style="left:669.6px;top:314px;letter-spacing:-0.000px;">Dateiordner</div>
<div class="t" style="left:309.3px;top:335px;letter-spacing:0.135px;">Promotionskolleg</div>
<div class="t gr" style="left:549.8px;top:335px;letter-spacing:-0.450px;transform:scaleX(0.9766);">14.12.2018 09:50</div>
<div class="t gr" style="left:669.6px;top:335px;letter-spacing:-0.000px;">Dateiordner</div>
<div class="t" style="left:309.3px;top:356px;letter-spacing:-0.373px;">RIGL-Fulda</div>
<div class="t gr" style="left:550.5px;top:356px;letter-spacing:-0.450px;transform:scaleX(0.9684);">02.10.2018 13:17</div>
<div class="t gr" style="left:669.6px;top:356px;letter-spacing:-0.000px;">Dateiordner</div>
<div class="t" style="left:309.3px;top:377px;letter-spacing:-0.409px;">RZ-AG</div>
<div class="t gr" style="left:550.5px;top:377px;letter-spacing:-0.450px;transform:scaleX(0.9684);">21.03.2019 15:44</div>
<div class="t gr" style="left:669.6px;top:377px;letter-spacing:-0.000px;">Dateiordner</div>
<div class="t" style="left:309.3px;top:398px;letter-spacing:-0.080px;">RZ-Downloads</div>
<div class="t gr" style="left:549.8px;top:398px;letter-spacing:-0.450px;transform:scaleX(0.9766);">16.01.2019 10:08</div>
<div class="t gr" style="left:669.6px;top:398px;letter-spacing:-0.000px;">Dateiordner</div>
<div class="t" style="left:14.3px;top:708.5px;letter-spacing:-0.245px;">14 Elemente</div>
<div class="t" style="left:99.3px;top:708.5px;letter-spacing:-0.119px;">1 Element ausgewählt</div>

<!-- MENU -->
<div id="menulayer">
<div id="menu"></div>
<div class="abs" style="left:425px;top:533px;width:301px;height:22px;background:#dadada"></div>
<div class="abs" style="left:709px;top:311px;width:10px;height:14px"><svg viewBox="0 0 10 14" width="100%" height="100%" preserveAspectRatio="none" style="display:block;overflow:visible" ><path d="M1.4,0.8 L8.2,7 L1.4,13.2" fill="none" stroke="#1a1a1a" stroke-width="1"/></svg></div>
<div class="abs" style="left:709px;top:333px;width:10px;height:14px"><svg viewBox="0 0 10 14" width="100%" height="100%" preserveAspectRatio="none" style="display:block;overflow:visible" ><path d="M1.4,0.8 L8.2,7 L1.4,13.2" fill="none" stroke="#1a1a1a" stroke-width="1"/></svg></div>
<div class="abs" style="left:433px;top:354px;width:16px;height:16px"><svg viewBox="0 0 16 16" width="100%" height="100%" preserveAspectRatio="none" style="display:block;overflow:visible" >
<rect x="0" y="0" width="16" height="16" fill="#0b6fd6"/>
<path d="M0.9,2.8 C3.5,2.8 5.5,2.2 7.45,0.9 C9.4,2.2 11.5,2.8 14.1,2.8 V8.6 C13.2,11.6 10.6,13.8 7.45,15.2 C4.4,13.8 1.8,11.6 0.9,8.6 Z" fill="#fff"/>
<path d="M7.45,0.5 V15.6 M0.5,7.45 H14.6" stroke="#0b6fd6" stroke-width="1.15"/>
</svg></div>
<div class="msep" style="top:420px"></div>
<div class="abs" style="left:434px;top:428px;width:13px;height:13px"><svg viewBox="0 0 13 13" width="100%" height="100%" preserveAspectRatio="none" style="display:block;overflow:visible" >
<rect x="3.1" y="3.1" width="6.8" height="6.7" fill="none" stroke="#fff" stroke-width="0.45"/>
<path d="M2.8,0 H13 V9.9 H10.1 V2.9 H2.8 Z" fill="#002f6c"/>
<path d="M0.1,2.9 H2.9 V10 H10.1 V12.8 H0.1 Z" fill="#003c78"/>
</svg></div>
<div class="msep" style="top:449px"></div>
<div class="abs" style="left:434px;top:457px;width:13px;height:13px"><svg viewBox="0 0 13 13" width="100%" height="100%" preserveAspectRatio="none" style="display:block;overflow:visible" >
<rect x="3.1" y="3.1" width="6.8" height="6.7" fill="none" stroke="#fff" stroke-width="0.45"/>
<path d="M2.8,0 H13 V9.9 H10.1 V2.9 H2.8 Z" fill="#002f6c"/>
<path d="M0.1,2.9 H2.9 V10 H10.1 V12.8 H0.1 Z" fill="#003c78"/>
</svg></div>
<div class="msep" style="top:478px"></div>
<div class="abs" style="left:434px;top:486px;width:13px;height:13px"><svg viewBox="0 0 13 13" width="100%" height="100%" preserveAspectRatio="none" style="display:block;overflow:visible" >
<rect x="3.1" y="3.1" width="6.8" height="6.7" fill="none" stroke="#fff" stroke-width="0.45"/>
<path d="M2.8,0 H13 V9.9 H10.1 V2.9 H2.8 Z" fill="#002f6c"/>
<path d="M0.1,2.9 H2.9 V10 H10.1 V12.8 H0.1 Z" fill="#003c78"/>
</svg></div>
<div class="abs" style="left:434px;top:508px;width:13px;height:13px"><svg viewBox="0 0 13 13" width="100%" height="100%" preserveAspectRatio="none" style="display:block;overflow:visible" >
<rect x="3.1" y="3.1" width="6.8" height="6.7" fill="none" stroke="#fff" stroke-width="0.45"/>
<path d="M2.8,0 H13 V9.9 H10.1 V2.9 H2.8 Z" fill="#002f6c"/>
<path d="M0.1,2.9 H2.9 V10 H10.1 V12.8 H0.1 Z" fill="#003c78"/>
</svg></div>
<div class="msep" style="top:529px"></div>
<div class="abs" style="left:434px;top:537px;width:13px;height:13px"><svg viewBox="0 0 13 13" width="100%" height="100%" preserveAspectRatio="none" style="display:block;overflow:visible" >
<rect x="3.1" y="3.1" width="6.8" height="6.7" fill="none" stroke="#fff" stroke-width="0.45"/>
<path d="M2.8,0 H13 V9.9 H10.1 V2.9 H2.8 Z" fill="#002f6c"/>
<path d="M0.1,2.9 H2.9 V10 H10.1 V12.8 H0.1 Z" fill="#003c78"/>
</svg></div>
<div class="abs" style="left:434px;top:559px;width:13px;height:13px"><svg viewBox="0 0 13 13" width="100%" height="100%" preserveAspectRatio="none" style="display:block;overflow:visible" >
<rect x="3.1" y="3.1" width="6.8" height="6.7" fill="none" stroke="#fff" stroke-width="0.45"/>
<path d="M2.8,0 H13 V9.9 H10.1 V2.9 H2.8 Z" fill="#002f6c"/>
<path d="M0.1,2.9 H2.9 V10 H10.1 V12.8 H0.1 Z" fill="#003c78"/>
</svg></div>
<div class="msep" style="top:580px"></div>
<div class="msep" style="top:609px"></div>
<div class="abs" style="left:709px;top:617px;width:10px;height:14px"><svg viewBox="0 0 10 14" width="100%" height="100%" preserveAspectRatio="none" style="display:block;overflow:visible" ><path d="M1.4,0.8 L8.2,7 L1.4,13.2" fill="none" stroke="#1a1a1a" stroke-width="1"/></svg></div>
<div class="msep" style="top:638px"></div>
<div class="msep" style="top:711px"></div>
<div class="t" style="left:457.6px;top:223px;letter-spacing:0.055px;font-weight:bold;-webkit-text-stroke-color:#f2f2f2;">Öffnen</div>
<div class="t" style="left:456.9px;top:245px;letter-spacing:-0.080px;-webkit-text-stroke-color:#f2f2f2;">In neuem Fenster öffnen</div>
<div class="t" style="left:457.6px;top:267px;letter-spacing:-0.034px;-webkit-text-stroke-color:#f2f2f2;">An Schnellzugriff anheften</div>
<div class="t" style="left:457.6px;top:289px;letter-spacing:-0.021px;-webkit-text-stroke-color:#f2f2f2;">Open MobaXterm terminal here</div>
<div class="t" style="left:457.6px;top:311px;letter-spacing:-0.069px;-webkit-text-stroke-color:#f2f2f2;">7-Zip</div>
<div class="t" style="left:457.6px;top:333px;letter-spacing:-0.450px;transform:scaleX(0.9437);-webkit-text-stroke-color:#f2f2f2;">CRC SHA</div>
<div class="t" style="left:456.9px;top:355px;letter-spacing:-0.012px;-webkit-text-stroke-color:#f2f2f2;">Mit Windows Defender überprüfen...</div>
<div class="t" style="left:456.9px;top:377px;letter-spacing:0.048px;-webkit-text-stroke-color:#f2f2f2;">Mit Sophos Anti-Virus überprüfen</div>
<div class="t" style="left:457.6px;top:399px;letter-spacing:-0.161px;-webkit-text-stroke-color:#f2f2f2;">Vorgängerversionen wiederherstellen</div>
<div class="t" style="left:457.6px;top:428px;letter-spacing:-0.450px;transform:scaleX(0.9922);-webkit-text-stroke-color:#f2f2f2;">OES-Kopie ...</div>
<div class="t" style="left:457.6px;top:457px;letter-spacing:-0.221px;-webkit-text-stroke-color:#f2f2f2;">OES-Netzlaufwerk zuordnen ...</div>
<div class="t" style="left:456.9px;top:486px;letter-spacing:-0.123px;-webkit-text-stroke-color:#f2f2f2;">Dateien zurückholen...</div>
<div class="t" style="left:456.9px;top:508px;letter-spacing:-0.135px;-webkit-text-stroke-color:#f2f2f2;">Dateien entfernen...</div>
<div class="t" style="left:457.6px;top:537px;letter-spacing:-0.310px;-webkit-text-stroke-color:#dadada;">Trustee-Rechte...</div>
<div class="t" style="left:457.6px;top:559px;letter-spacing:-0.221px;-webkit-text-stroke-color:#f2f2f2;">Vererbte Rechte und Filter...</div>
<div class="t" style="left:457.6px;top:588px;letter-spacing:-0.064px;-webkit-text-stroke-color:#f2f2f2;">An "Start" anheften</div>
<div class="t" style="left:457.6px;top:617px;letter-spacing:-0.450px;-webkit-text-stroke-color:#f2f2f2;">Senden an</div>
<div class="t" style="left:457.6px;top:646px;letter-spacing:-0.224px;-webkit-text-stroke-color:#f2f2f2;">Ausschneiden</div>
<div class="t" style="left:456.9px;top:668px;letter-spacing:-0.168px;-webkit-text-stroke-color:#f2f2f2;">Kopieren</div>
<div class="t" style="left:456.9px;top:690px;letter-spacing:-0.084px;-webkit-text-stroke-color:#f2f2f2;">Einfügen</div>
<div class="t" style="left:457.6px;top:719px;letter-spacing:-0.100px;-webkit-text-stroke-color:#f2f2f2;">Verknüpfung erstellen</div>
</div>
</body>
</html>
